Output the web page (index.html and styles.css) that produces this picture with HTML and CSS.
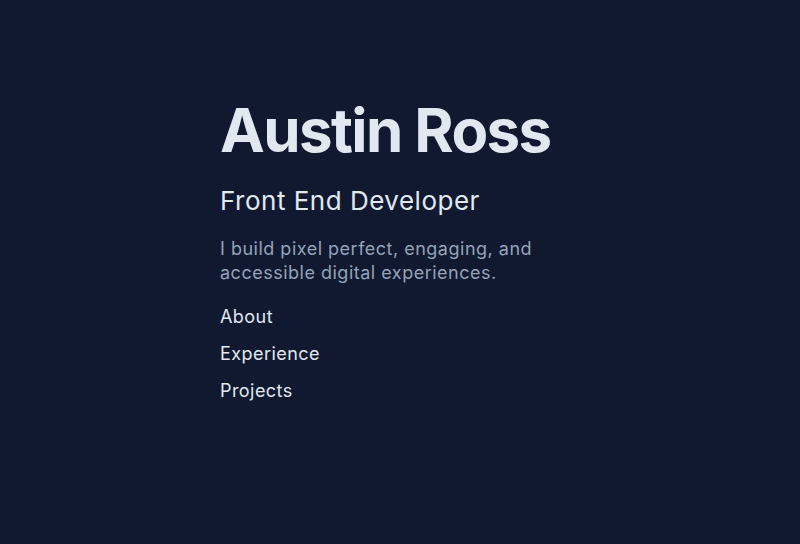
FILE: index.html
```html
<!DOCTYPE html>
<html lang="en">
<head>
<meta charset="utf-8">
<title>Austin Ross</title>
<link rel="stylesheet" href="styles.css">
</head>
<body>
<main class="page">
  <header class="intro">
    <h1 class="name">Austin Ross</h1>
    <h2 class="role">Front End Developer</h2>
    <p class="tagline">I build pixel perfect, engaging, and accessible digital experiences.</p>
    <nav class="nav">
      <a class="nav-link" href="#about">About</a>
      <a class="nav-link" href="#experience">Experience</a>
      <a class="nav-link" href="#projects">Projects</a>
    </nav>
  </header>
</main>
</body>
</html>
```
FILE: styles.css
```css
html, body {
  margin: 0;
  padding: 0;
  background: #101930;
  height: 100%;
}
body {
  font-family: Inter, "Noto Sans", sans-serif;
  color: #e2e8f0;
}
.page {
  padding: 100px 0 0 220px;
}
.intro {
  display: flex;
  flex-direction: column;
  align-items: flex-start;
}
.name {
  margin: 0;
  font-size: 60px;
  line-height: 60px;
  font-weight: 700;
  letter-spacing: -1.6px;
  color: #e2e8f0;
}
.role {
  margin: 25px 0 0;
  font-size: 26px;
  line-height: 32px;
  font-weight: 400;
  letter-spacing: 0.5px;
  color: #e2e8f0;
}
.tagline {
  margin: 20px 0 0;
  max-width: 330px;
  font-size: 18px;
  line-height: 24px;
  letter-spacing: 0.5px;
  color: #94a3b8;
}
.nav {
  display: flex;
  flex-direction: column;
  gap: 13px;
  margin-top: 20px;
}
.nav-link {
  font-size: 18px;
  line-height: 24px;
  letter-spacing: 0.45px;
  color: #e2e8f0;
  text-decoration: none;
}
```
